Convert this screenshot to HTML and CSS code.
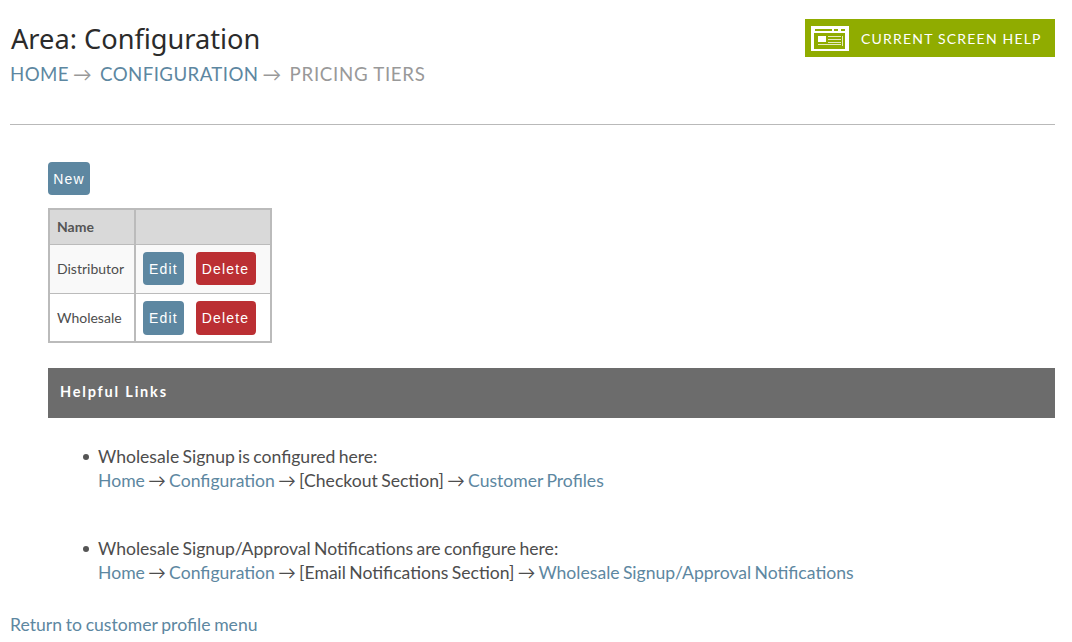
FILE: index.html
```html
<!DOCTYPE html>
<html lang="en">
<head>
  <meta charset="UTF-8" />
  <title>Pricing Tiers</title>
  <link rel="stylesheet" href="styles.css">
</head>
<body>

  <header class="page-header">
    <div>
      <h1>Area: Configuration</h1>
      <div class="breadcrumb">
        <a href="#">Home</a><span class="arrow">→</span><a href="#">Configuration</a><span class="arrow">→</span><span class="current">Pricing Tiers</span>
      </div>
    </div>
    <a href="#" class="help-btn">
      <svg class="help-icon" width="38" height="25" viewBox="0 0 38 25">
        <rect width="38" height="25" fill="#fff"/>
        <rect x="4" y="3" width="17" height="2" fill="#90ac00"/>
        <rect x="23" y="3" width="4" height="2" fill="#90ac00"/>
        <rect x="30" y="3" width="4" height="2" fill="#90ac00"/>
        <rect x="3" y="7" width="31" height="16" fill="#90ac00"/>
        <rect x="7" y="10" width="8" height="6" fill="#fff"/>
        <rect x="17" y="10" width="13" height="1" fill="#e6ebc0"/>
        <rect x="17" y="13" width="13" height="1" fill="#e6ebc0"/>
        <rect x="17" y="16" width="13" height="1" fill="#e6ebc0"/>
        <rect x="7" y="18" width="23" height="1" fill="#e6ebc0"/>
        <rect x="31" y="10" width="1" height="10" fill="#e6ebc0"/>
      </svg>
      Current Screen Help
    </a>
  </header>

  <main class="content">
    <a href="#" class="btn btn-new">New</a>

    <table class="tiers">
      <thead>
        <tr><th>Name</th><th></th></tr>
      </thead>
      <tbody>
        <tr>
          <td>Distributor</td>
          <td><div class="actions"><a href="#" class="btn">Edit</a><a href="#" class="btn btn-delete">Delete</a></div></td>
        </tr>
        <tr>
          <td>Wholesale</td>
          <td><div class="actions"><a href="#" class="btn">Edit</a><a href="#" class="btn btn-delete">Delete</a></div></td>
        </tr>
      </tbody>
    </table>

    <h2 class="links-title">Helpful Links</h2>

    <ul class="links">
      <li>
        Wholesale Signup is configured here:<br>
        <a href="#">Home</a> → <a href="#">Configuration</a> → [Checkout Section] → <a href="#">Customer Profiles</a>
      </li>
      <li>
        Wholesale Signup/Approval Notifications are configure here:<br>
        <a href="#">Home</a> → <a href="#">Configuration</a> → [Email Notifications Section] → <a href="#">Wholesale Signup/Approval Notifications</a>
      </li>
    </ul>
  </main>

  <a href="#" class="back-link">Return to customer profile menu</a>

</body>
</html>
```

FILE: styles.css
```css
* {
  box-sizing: border-box;
  margin: 0;
  padding: 0;
}
body {
  font-family: 'Lato', 'Liberation Sans', sans-serif;
  font-size: 17.6px;
  line-height: 24px;
  word-spacing: -1.2px;
  color: #4d4d4d;
  background: #fff;
  padding: 0 17px 0 10px;
  overflow: hidden;
}
a {
  color: #5d87a1;
  text-decoration: none;
}

.page-header {
  display: flex;
  justify-content: space-between;
  align-items: flex-start;
  height: 125px;
  padding-top: 19px;
  border-bottom: 1px solid #b9b9b9;
  word-spacing: 0;
}
.page-header h1 {
  font-family: 'Noto Sans', sans-serif;
  font-size: 27.2px;
  font-weight: 400;
  line-height: 38px;
  color: #2b2b2b;
  margin: 1px 0 0 1px;
}
.breadcrumb {
  font-size: 18.7px;
  line-height: 24px;
  letter-spacing: 0.4px;
  margin-top: 4px;
  text-transform: uppercase;
}
.breadcrumb .arrow {
  margin: 0 8px 0 4px;
  color: #999;
}
.breadcrumb .current {
  color: #999;
  letter-spacing: 0.7px;
}

.help-btn {
  display: flex;
  align-items: center;
  gap: 12px;
  width: 250px;
  height: 38px;
  padding: 1px 0 0 6px;
  background: #90ac00;
  color: #fff;
  font-size: 14px;
  letter-spacing: 1.2px;
  text-transform: uppercase;
}

.content {
  margin-left: 38px;
  padding-top: 37px;
}

.btn {
  display: inline-block;
  font-family: 'Liberation Sans', sans-serif;
  font-size: 14px;
  line-height: 20px;
  letter-spacing: 1.15px;
  color: #fff;
  background: #5d87a1;
  padding: 7px 6px 6px;
  border-radius: 4px;
}
.btn-delete {
  background: #bb2f33;
  padding-right: 7px;
}
.btn-new {
  display: block;
  width: 42px;
  height: 33px;
  text-align: center;
  padding-left: 0;
  padding-right: 0;
}
.actions {
  display: flex;
  gap: 12px;
}

.tiers {
  border-collapse: collapse;
  border: 2px solid #bbb;
  margin-top: 13px;
  font-size: 14px;
  line-height: 20px;
  word-spacing: 0;
}
.tiers th, .tiers td {
  border: 1px solid #bbb;
  padding: 7px 10px 8px 7px;
  text-align: left;
}
.tiers td + td {
  padding-right: 14px;
  border-left-width: 2px;
}
.tiers th + th {
  border-left-width: 2px;
}
.tiers th {
  background: #d9d9d9;
  padding-top: 7px;
  padding-bottom: 7px;
  height: 33px;
  font-weight: 700;
  color: #555;
}
.tiers tbody tr:nth-child(odd) {
  background: #f9f9f9;
}
.tiers tbody tr + tr td {
  padding-bottom: 6px;
}
.tiers tbody tr + tr .btn {
  height: 34px;
}

.links-title {
  background: #6c6c6c;
  color: #fff;
  font-size: 14.5px;
  font-weight: 700;
  letter-spacing: 1.8px;
  word-spacing: 0;
  line-height: 48px;
  height: 50px;
  padding-left: 12px;
  margin-top: 25px;
}

.links {
  list-style: none;
  padding-left: 50px;
  margin-top: 27px;
}
.links li {
  position: relative;
}
.links li + li {
  margin-top: 44px;
}
.links li::before {
  content: "";
  position: absolute;
  left: -15px;
  top: 9px;
  width: 6px;
  height: 6px;
  border-radius: 50%;
  background: #555;
}

.back-link {
  display: block;
  margin-top: 28px;
  word-spacing: -0.8px;
}
```
